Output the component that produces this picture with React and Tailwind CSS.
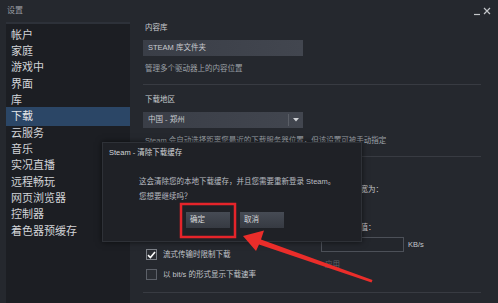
export default function App() {
  const items = ["帐户", "家庭", "游戏中", "界面", "库", "下载", "云服务", "音乐", "实况直播", "远程畅玩", "网页浏览器", "控制器", "着色器预缓存"];
  return (
    <div className="relative w-[498px] h-[303px] overflow-hidden bg-[#25282e] flex flex-col font-['Liberation_Sans','Noto_Sans_CJK_SC',sans-serif]">
      {/* title bar */}
      <div className="h-[22px] flex items-center justify-between pl-[7px] pr-[5px] shrink-0">
        <span className="text-[8px] leading-none text-[#9a9da2]">设置</span>
        <svg width="20" height="10" viewBox="0 0 20 10" className="text-[#c3c5c9]">
          <path d="M1 8.5 H7" stroke="currentColor" strokeWidth="1.2" />
          <path d="M11 2 L17 8 M17 2 L11 8" stroke="currentColor" strokeWidth="1.2" />
        </svg>
      </div>
      <div className="flex flex-1 min-h-0">
        {/* sidebar */}
        <div className="ml-[6px] w-[124px] shrink-0 bg-[#1c1e23] border-t-2 border-[#2d3139] pt-[3px] flex flex-col">
          {items.map((t) =>
            t === "下载" ? (
              <div key={t} className="h-[19px] -my-[1.33px] flex items-center pl-[5px] text-[11px] leading-none text-[#e2e4e7] bg-[#2b4666]">
                {t}
              </div>
            ) : (
              <div key={t} className="h-[16.33px] flex items-center pl-[5px] text-[11px] leading-none text-[#d2d4d8]">
                {t}
              </div>
            )
          )}
        </div>
        {/* content */}
        <div className="ml-[13px] pr-[17px] flex-1 flex flex-col text-[7.5px] leading-none">
          <div className="h-[12px] flex items-center pl-[2px] text-[#c9ccd1]">内容库</div>
          <div className="mt-[6px] h-[16px] w-[160px] flex items-center pl-[5px] bg-gradient-to-r from-[#3a3e47] to-[#42464f] text-[#c8cacf]">STEAM 库文件夹</div>
          <div className="mt-[7px] h-[12px] flex items-center pl-[2px] text-[#9da1a7]">管理多个驱动器上的内容位置</div>
          <div className="mt-[9px] h-px bg-[#383b42]" />
          <div className="mt-[9px] h-[12px] flex items-center pl-[2px] text-[#c9ccd1]">下载地区</div>
          <div className="mt-[6px] h-[16px] w-[160px] flex items-center bg-gradient-to-r from-[#3a3e47] to-[#42464f] text-[#c8cacf]">
            <span className="flex-1 pl-[5px]">中国 - 郑州</span>
            <div className="w-px h-[12px] bg-[#5a5e66]" />
            <div className="w-[14px] flex items-center justify-center">
              <svg width="6" height="4" viewBox="0 0 6 4"><path d="M0 0 H6 L3 3.5 Z" fill="#d0d2d6" /></svg>
            </div>
          </div>
          <div className="mt-[7px] h-[12px] flex items-center pl-[2px] text-[#9da1a7] whitespace-nowrap">Steam 会自动选择距离您最近的下载服务器位置，但该设置可被手动指定</div>
          <div className="mt-[9px] h-px bg-[#383b42]" />
          <div className="flex">
            <div className="w-[178px] shrink-0 flex flex-col">
              <div className="mt-[91.5px] h-[12px] flex items-center pl-[3px] gap-[6px] text-[#c3c6cb]">
                <div className="w-[11px] h-[11px] border border-[#7d8188] bg-[#2a2d33] flex items-center justify-center">
                  <svg width="9" height="8" viewBox="0 0 9 8"><path d="M1 4.2 L3.4 6.5 L8 1" stroke="#ffffff" strokeWidth="1.6" fill="none" /></svg>
                </div>
                <span>流式传输时限制下载</span>
              </div>
              <div className="mt-[8px] h-[12px] flex items-center pl-[3px] gap-[6px] text-[#c3c6cb]">
                <div className="w-[11px] h-[11px] border border-[#5c6068] bg-[#2a2d33]" />
                <span>以 bit/s 的形式显示下载速率</span>
              </div>
            </div>
            <div className="flex flex-col">
              <div className="mt-[27px] h-[12px] flex items-center pl-[2px] text-[#c3c6cb] whitespace-nowrap">下载限制带宽为：</div>
              <div className="mt-[26px] h-[12px] flex items-center pl-[2px] text-[#c3c6cb] whitespace-nowrap">下载速度阈值：</div>
              <div className="mt-[3px] flex items-center gap-[4px]">
                <div className="w-[83px] h-[15px] border border-[#4c5058] bg-[#23262c]" />
                <span className="text-[#c3c6cb]">KB/s</span>
              </div>
              <div className="mt-[7px] h-[12px] flex items-center pl-[4px] text-[#5d6169]">应用</div>
            </div>
          </div>
          <div className="mt-[11.5px] h-px bg-[#383b42]" />
        </div>
      </div>

      {/* dialog */}
      <div className="absolute left-[102px] top-[142px] w-[260px] h-[100px] bg-[#1f2126] border border-[#2e3137] shadow-[0_0_6px_rgba(0,0,0,0.6)] flex flex-col text-[7.5px] leading-none">
        <div className="mt-[4px] h-[12px] flex items-center pl-[6px] text-[#d3d5d9]">Steam - 清除下载缓存</div>
        <div className="mt-[17px] h-[12px] flex items-center pl-[36px] text-[#b9bcc1] whitespace-nowrap">这会清除您的本地下载缓存，并且您需要重新登录 Steam。</div>
        <div className="mt-[3px] h-[12px] flex items-center pl-[36px] text-[#b9bcc1]">您想要继续吗？</div>
        <div className="mt-[9px] flex pl-[83px] gap-[10px]">
          <div className="w-[44px] h-[16px] flex items-center pl-[4px] bg-gradient-to-b from-[#464b54] to-[#363a42] text-[#d6d8db]">确定</div>
          <div className="w-[44px] h-[16px] flex items-center pl-[4px] bg-gradient-to-b from-[#464b54] to-[#363a42] text-[#d6d8db]">取消</div>
        </div>
      </div>

      {/* annotations */}
      <svg className="absolute left-0 top-0 pointer-events-none" width="498" height="303" viewBox="0 0 498 303">
        <rect x="181" y="204" width="54" height="33" fill="none" stroke="#e5242a" strokeWidth="2.5" />
        <polygon points="243,236 264,230.5 261,239.5 372.5,280 371.5,282.5 259,244.5 256,251" fill="#ea2d2a" />
      </svg>
    </div>
  );
}
